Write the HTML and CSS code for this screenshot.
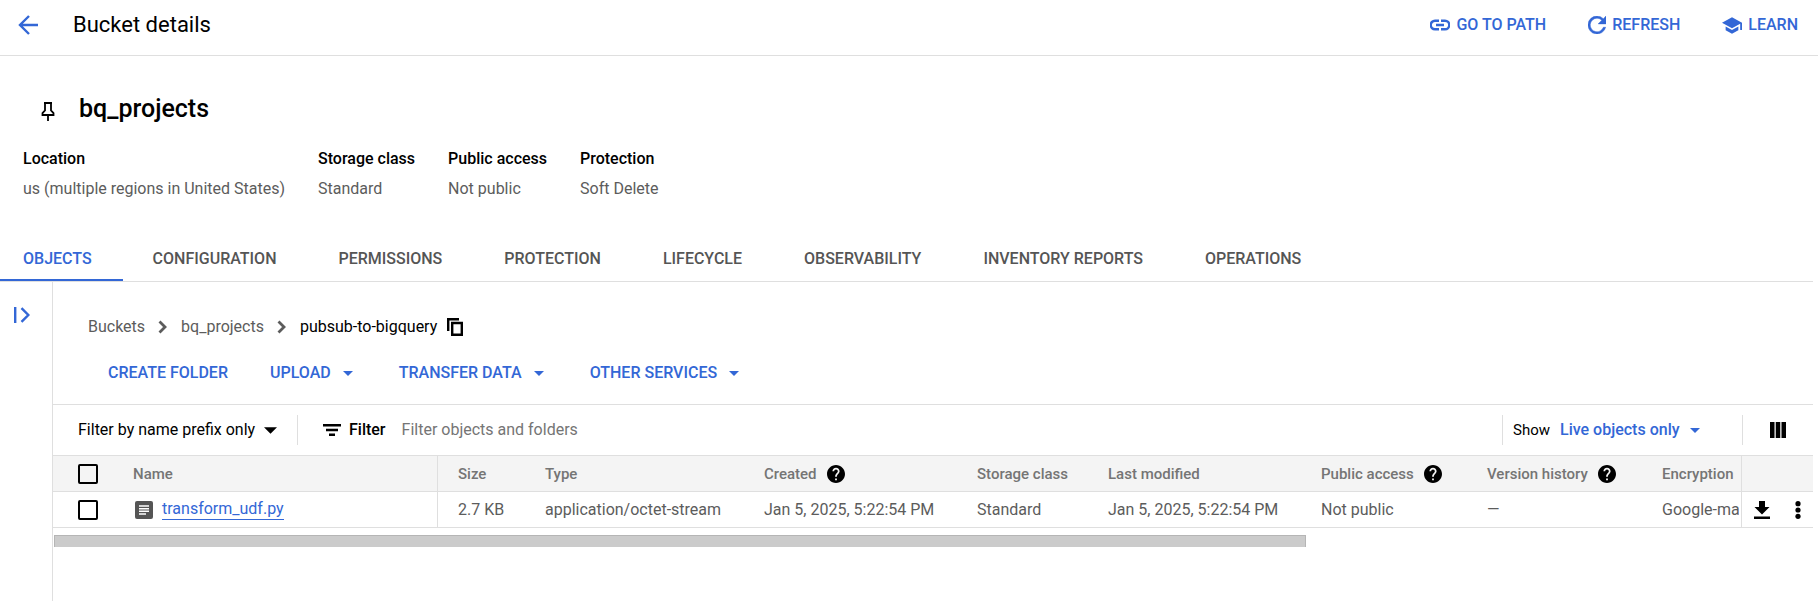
FILE: index.html
```html
<!DOCTYPE html>
<html lang="en">
<head>
<meta charset="utf-8">
<title>Bucket details</title>
<link rel="stylesheet" href="styles.css">
</head>
<body>
<svg class="sprite" aria-hidden="true">
  <symbol id="caret" viewBox="0 0 10 5"><path d="M0 0h10L5 5z"/></symbol>
  <symbol id="chevron" viewBox="0 0 10 14"><path d="M1.500 1.500 7 7l-5.500 5.500" fill="none" stroke="currentColor" stroke-width="2.800"/></symbol>
  <symbol id="help" viewBox="2 2 20 20"><path d="M12 2C6.480 2 2 6.480 2 12s4.480 10 10 10 10-4.480 10-10S17.520 2 12 2zm1 17h-2v-2h2v2zm2.070-7.750-.9.920C13.450 12.900 13 13.500 13 15h-2v-.5c0-1.100.45-2.100 1.170-2.830l1.240-1.260c.37-.36.590-.86.590-1.410 0-1.100-.9-2-2-2s-2 .9-2 2H8c0-2.210 1.790-4 4-4s4 1.790 4 4c0 .88-.36 1.680-.93 2.250z" stroke="none"/></symbol>
</svg>

<header class="topbar">
  <a class="back" href="#" aria-label="Back"><svg width="20" height="20" viewBox="0 0 20 20"><path d="M20 10H2M11 1 2 10l9 9" fill="none" stroke="currentColor" stroke-width="2.400"/></svg></a>
  <h1 class="page-title">Bucket details</h1>
  <nav class="top-actions">
    <button class="text-button" type="button"><svg width="20" height="12" viewBox="2 6 20 12"><path d="M3.900 12c0-1.710 1.390-3.100 3.100-3.100h4V6.500H7a5.500 5.500 0 0 0 0 11h4v-2.400H7c-1.710 0-3.100-1.390-3.100-3.100zM8 13.200h8v-2.400H8zM17 6.500h-4v2.400h4a3.100 3.100 0 0 1 0 6.200h-4v2.400h4a5.500 5.500 0 0 0 0-11z"/></svg>GO TO PATH</button>
    <button class="text-button" type="button"><svg width="18" height="18" viewBox="4 4 16 16"><path d="M17.650 6.350A7.958 7.958 0 0 0 12 4a8 8 0 1 0 7.730 10h-2.080A6 6 0 1 1 12 6c1.660 0 3.140.69 4.220 1.780L13 11h7V4l-2.350 2.350z" stroke="currentColor" stroke-width=".4"/></svg>REFRESH</button>
    <button class="text-button" type="button"><svg width="20" height="17" viewBox="1 3 22 18"><path d="M5 13.180v4L12 21l7-3.820v-4L12 17l-7-3.820zM12 3 1 9l11 6 9-4.910V17h2V9L12 3z"/></svg>LEARN</button>
  </nav>
</header>

<section class="summary">
  <div class="bucket-heading">
    <button class="icon-button" type="button" aria-label="Pin"><svg width="14" height="19" viewBox="0 0 14 19"><path d="M3 1h8M4 1v7.500L1.500 11v2h11v-2L10 8.500V1M7 13v6" fill="none" stroke="currentColor" stroke-width="1.800"/></svg></button>
    <h2 class="bucket-name">bq_projects</h2>
  </div>
  <dl class="facts">
    <div><dt>Location</dt><dd>us (multiple regions in United States)</dd></div>
    <div><dt>Storage class</dt><dd>Standard</dd></div>
    <div><dt>Public access</dt><dd>Not public</dd></div>
    <div><dt>Protection</dt><dd>Soft Delete</dd></div>
  </dl>
</section>

<nav class="tabs">
  <a class="tab active" href="#">OBJECTS</a>
  <a class="tab" href="#">CONFIGURATION</a>
  <a class="tab" href="#">PERMISSIONS</a>
  <a class="tab" href="#">PROTECTION</a>
  <a class="tab" href="#">LIFECYCLE</a>
  <a class="tab" href="#">OBSERVABILITY</a>
  <a class="tab" href="#">INVENTORY REPORTS</a>
  <a class="tab" href="#">OPERATIONS</a>
</nav>

<div class="workspace">
  <aside class="rail">
    <button class="icon-button blue" type="button" aria-label="Show folder browser"><svg width="16" height="16" viewBox="0 0 16 16"><path d="M1.200 0v16M7.500 1.200 14.300 8l-6.800 6.800" fill="none" stroke="currentColor" stroke-width="2.400"/></svg></button>
  </aside>
  <main class="browser">
    <nav class="crumbs">
      <a href="#">Buckets</a>
      <svg width="10" height="14"><use href="#chevron"/></svg>
      <a href="#">bq_projects</a>
      <svg width="10" height="14"><use href="#chevron"/></svg>
      <span class="current">pubsub-to-bigquery</span>
      <button class="icon-button copy" type="button" aria-label="Copy path"><svg width="16" height="18" viewBox="0 0 16 18"><path d="M1.200 13V1.200H12M5.200 5h9.600v11.800H5.200z" fill="none" stroke="currentColor" stroke-width="2.400"/></svg></button>
    </nav>
    <div class="actions">
      <button class="text-button" type="button">CREATE FOLDER</button>
      <button class="text-button menu" type="button">UPLOAD<svg width="10" height="5"><use href="#caret"/></svg></button>
      <button class="text-button menu" type="button">TRANSFER DATA<svg width="10" height="5"><use href="#caret"/></svg></button>
      <button class="text-button menu" type="button">OTHER SERVICES<svg width="10" height="5"><use href="#caret"/></svg></button>
    </div>

    <div class="filterbar">
      <div class="prefix">
        <select aria-label="Filter mode"><option>Filter by name prefix only</option></select>
        <svg width="13" height="7"><use href="#caret"/></svg>
      </div>
      <svg class="filter-icon" width="18" height="12" viewBox="0 0 18 12"><path d="M0 1.200h18M3 6h12M6 10.800h6" fill="none" stroke="currentColor" stroke-width="2.400"/></svg>
      <label class="filter-label" for="filter">Filter</label>
      <input class="filter-input" id="filter" type="text" placeholder="Filter objects and folders">
      <div class="show">
        <label for="show">Show</label>
        <select class="blue" id="show"><option>Live objects only</option></select>
        <svg class="blue" width="10" height="5"><use href="#caret"/></svg>
      </div>
      <div class="columns">
        <button class="icon-button" type="button" aria-label="Column display options"><svg width="16" height="16" viewBox="0 0 16 16"><path d="M0 0h4.500v16H0zM5.750 0h4.500v16h-4.500zM11.500 0H16v16h-4.500z"/></svg></button>
      </div>
    </div>

    <table class="objects">
      <colgroup>
        <col class="c-check"><col class="c-name"><col class="c-size"><col class="c-type"><col class="c-date"><col class="c-class"><col class="c-date"><col class="c-access"><col class="c-version"><col><col class="c-tools">
      </colgroup>
      <thead>
        <tr>
          <th class="check"><input type="checkbox" aria-label="Select all"></th>
          <th class="name">Name</th>
          <th>Size</th>
          <th>Type</th>
          <th><span class="th-help">Created<svg width="18" height="18"><use href="#help"/></svg></span></th>
          <th>Storage class</th>
          <th>Last modified</th>
          <th><span class="th-help">Public access<svg width="18" height="18"><use href="#help"/></svg></span></th>
          <th><span class="th-help">Version history<svg width="18" height="18"><use href="#help"/></svg></span></th>
          <th>Encryption</th>
          <th class="tools"></th>
        </tr>
      </thead>
      <tbody>
        <tr>
          <td class="check"><input type="checkbox" aria-label="Select transform_udf.py"></td>
          <td class="name"><span class="file"><svg width="18" height="18" viewBox="0 0 18 18"><rect width="18" height="18" rx="2" fill="#555"/><path d="M4 5h10M4 7.700h10M4 10.300h10M4 13h7" stroke="#fff" stroke-width="1.400"/></svg><a href="#">transform_udf.py</a></span></td>
          <td>2.7 KB</td>
          <td>application/octet-stream</td>
          <td>Jan 5, 2025, 5:22:54 PM</td>
          <td>Standard</td>
          <td>Jan 5, 2025, 5:22:54 PM</td>
          <td>Not public</td>
          <td>—</td>
          <td class="encryption"><div class="clip">Google-managed</div></td>
          <td class="tools"><div class="row-tools">
            <button class="icon-button" type="button" aria-label="Download"><svg width="16" height="18" viewBox="0 0 16 18"><path d="M5 0h6v6h4.500L8 13.500.5 6H5zM0 15.600h16V18H0z"/></svg></button>
            <button class="icon-button" type="button" aria-label="More actions"><svg width="6" height="18" viewBox="0 0 6 18"><circle cx="3" cy="2.700" r="2.600"/><circle cx="3" cy="9" r="2.600"/><circle cx="3" cy="15.300" r="2.600"/></svg></button>
          </div></td>
        </tr>
      </tbody>
    </table>
    <div class="scroll-track"><div class="scroll-thumb"></div></div>
  </main>
</div>
</body>
</html>
```
FILE: styles.css
```css
* { box-sizing: border-box; }
body {
  margin: 0;
  min-height: 100vh;
  display: flex;
  flex-direction: column;
  font: 16px/24px Roboto, sans-serif;
  color: #000;
  background: #fff;
}
h1, h2, dl, dd { margin: 0; }
a { color: inherit; text-decoration: none; }
svg { display: block; flex: none; fill: currentColor; }
.sprite { position: absolute; width: 0; height: 0; }
button, select, input { font: inherit; color: inherit; background: none; border: 0; padding: 0; margin: 0; }
select { appearance: none; }
.icon-button { display: flex; }
.blue { color: #3367d6; }

.text-button {
  display: flex;
  align-items: center;
  gap: 6px;
  color: #3367d6;
  font-weight: 500;
  white-space: nowrap;
}
.text-button.menu { gap: 12px; padding-right: 4px; }

.topbar {
  display: flex;
  align-items: center;
  height: 56px;
  padding: 0 20px 5px 18px;
  border-bottom: 1px solid #dfdfdf;
}
.back { color: #3367d6; }
.page-title { margin-left: 35px; font-size: 22px; font-weight: 400; }
.top-actions { display: flex; gap: 42px; margin-left: auto; }

.summary { padding: 40px 23px 0; }
.bucket-heading { display: flex; align-items: center; gap: 24px; padding-left: 18px; }
.bucket-heading .icon-button { padding-top: 5px; }
.bucket-name { font-size: 25px; line-height: 26px; font-weight: 500; }
.facts { display: flex; gap: 33px; padding-top: 25px; }
.facts dt { font-weight: 500; }
.facts dd { padding-top: 6px; color: #5c5c5c; }

.tabs { display: flex; margin: 34px 5px 0 0; border-bottom: 1px solid #dfdfdf; }
.tab {
  padding: 12px 39px 8px 23px;
  font-weight: 500;
  line-height: 24px;
  color: #555;
  white-space: nowrap;
}
.tab.active { padding-right: 31px; margin-right: 7px; color: #3367d6; border-bottom: 2px solid; }

.workspace { display: flex; flex: 1; margin-right: 5px; }
.rail { flex: none; width: 53px; padding: 25px 14px; border-right: 1px solid #dfdfdf; }
.browser { flex: 1; min-width: 0; }

.crumbs { display: flex; align-items: center; gap: 13px; padding: 33px 35px 0; color: #5c5c5c; }
.crumbs .current { color: #000; }
.crumbs .copy { color: #000; margin-left: -3px; }
.actions { display: flex; gap: 42px; padding: 22px 55px 19px; }

.filterbar {
  display: flex;
  align-items: center;
  height: 52px;
  padding-left: 25px;
  border: solid #dfdfdf;
  border-width: 1px 0;
}
.prefix, .show, .columns { display: flex; align-items: center; height: 30px; }
.prefix { gap: 8px; padding-right: 20px; border-right: 1px solid #dfdfdf; }
.filter-icon { margin-left: 25px; }
.filter-label { margin-left: 8px; font-weight: 500; }
.filter-input { flex: 1; min-width: 0; margin-left: 16px; outline: 0; }
.filter-input::placeholder { color: #757575; opacity: 1; }
.show { gap: 10px; padding: 0 42px 0 10px; border-left: 1px solid #dfdfdf; }
.show label { font-size: 15px; }
.show select { font-weight: 500; }
.columns { padding: 0 27px; border-left: 1px solid #dfdfdf; }

.objects { width: 100%; table-layout: fixed; border-collapse: separate; border-spacing: 0; }
.objects th, .objects td {
  height: 36px;
  padding: 0 0 0 20px;
  border-bottom: 1px solid #dfdfdf;
  text-align: left;
  white-space: nowrap;
  overflow: hidden;
  color: #5c5c5c;
}
.objects th { font-size: 15px; font-weight: 500; color: #757575; background: #f4f4f4; }
.objects .check { padding-left: 25px; }
.objects .name { padding-left: 0; border-right: 1px solid #dfdfdf; }
.objects .encryption { padding-right: 2px; }
.objects .tools { padding-left: 12px; border-left: 1px solid #dfdfdf; }
.clip { overflow: hidden; }
.c-check { width: 80px; }
.c-name { width: 305px; }
.c-size { width: 87px; }
.c-type { width: 219px; }
.c-date { width: 213px; }
.c-class { width: 131px; }
.c-access { width: 166px; }
.c-version { width: 175px; }
.c-tools { width: 72px; }
.objects input {
  display: block;
  appearance: none;
  width: 20px;
  height: 20px;
  border: 2px solid #000;
  border-radius: 2px;
}
.th-help { display: flex; align-items: center; gap: 10px; }
.th-help svg { color: #000; }
.file { display: flex; align-items: center; gap: 9px; padding-left: 2px; }
.file a { line-height: 20px; color: #3367d6; border-bottom: 1px solid; }
.row-tools { display: flex; align-items: center; gap: 25px; color: #000; }

.scroll-track { padding: 7px 1px 0; }
.scroll-thumb {
  width: 71.2%;
  height: 12px;
  background: #cbcbcb;
  border: solid #b5b5b5;
  border-width: 1px 1px 0;
}
```
